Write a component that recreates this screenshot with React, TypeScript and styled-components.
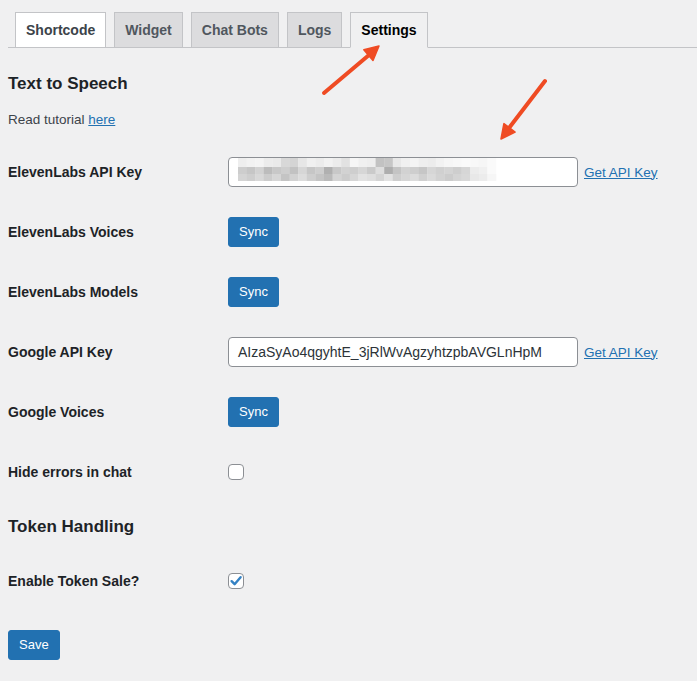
import React from "react";
import styled, { createGlobalStyle } from "styled-components";

const Global = createGlobalStyle`
  html, body { margin: 0; padding: 0; background: #f0f0f1; }
  body { font-family: "Liberation Sans", Arial, sans-serif; color: #1d2327; }
  #root { min-height: 681px; position: relative; }
`;

const Page = styled.div`
  padding: 0 0 0 8px;
  position: relative;
  min-height: 681px;
  box-sizing: border-box;
`;

const TabBar = styled.nav`
  display: flex;
  gap: 8px;
  padding: 12px 0 0 7px;
  border-bottom: 1px solid #c3c4c7;
`;

const Tab = styled.a<{ $state: "first" | "idle" | "active" }>`
  display: block;
  box-sizing: border-box;
  height: 36px;
  margin-bottom: -1px;
  padding: 5px 10px;
  border: 1px solid #c3c4c7;
  font-size: 14px;
  font-weight: 700;
  line-height: 24px;
  text-decoration: none;
  background: ${(p) => (p.$state === "first" ? "#ffffff" : p.$state === "active" ? "#f0f0f1" : "#dcdcde")};
  color: ${(p) => (p.$state === "first" ? "#3c434a" : p.$state === "active" ? "#000000" : "#50575e")};
  border-bottom-color: ${(p) => (p.$state === "active" ? "#f0f0f1" : "#c3c4c7")};
`;

const Heading = styled.h2<{ $top: number; $bottom: number }>`
  margin: ${(p) => p.$top}px 0 ${(p) => p.$bottom}px;
  font-size: 17px;
  line-height: 22px;
  font-weight: 700;
  color: #1d2327;
`;

const Note = styled.p`
  margin: 0 0 13px;
  font-size: 13.5px;
  line-height: 19px;
  color: #3c434a;
`;

const Link = styled.a`
  color: #2271b1;
  text-decoration: underline;
  font-size: 13.5px;
`;

const Form = styled.div`
  display: grid;
  grid-template-columns: 220px 1fr;
`;

const Label = styled.div`
  height: 60px;
  display: flex;
  align-items: center;
  font-size: 14px;
  font-weight: 700;
  color: #1d2327;
`;

const Field = styled.div`
  height: 60px;
  display: flex;
  align-items: center;
  gap: 6px;
`;

const TextBox = styled.div`
  box-sizing: border-box;
  width: 350px;
  height: 30px;
  padding: 0 9px;
  border: 1px solid #8c8f94;
  border-radius: 4px;
  background: #fff;
  display: flex;
  align-items: center;
  font-size: 14px;
  color: #2c3338;
  white-space: nowrap;
  overflow: hidden;
`;

const MaskBox = styled(TextBox)`
  align-items: flex-start;
  padding: 0 0 0 9px;
`;

const Button = styled.button`
  box-sizing: border-box;
  height: 30px;
  padding: 0 10px;
  border: 1px solid #2271b1;
  border-radius: 3px;
  background: #2271b1;
  color: #fff;
  font-family: "Liberation Sans", Arial, sans-serif;
  font-size: 13px;
  line-height: 28px;
  cursor: pointer;
`;

const SaveRow = styled.div`
  margin-top: 19px;
`;

const Box = styled.span`
  box-sizing: border-box;
  width: 16px;
  height: 16px;
  border: 1px solid #8c8f94;
  border-radius: 4px;
  background: #fff;
  display: inline-flex;
  align-items: center;
  justify-content: center;
`;

const Overlay = styled.svg`
  position: absolute;
  left: 0;
  top: 0;
  pointer-events: none;
`;

const Checkbox = ({ checked }: { checked?: boolean }) => (
  <Box>
    {checked && (
      <svg width="14" height="14" viewBox="0 0 14 14">
        <path d="M2.6 7.2 L5.6 10.2 L11.6 3.2" fill="none" stroke="#3582c4" strokeWidth="2.4" strokeLinecap="round" strokeLinejoin="round" />
      </svg>
    )}
  </Box>
);

const r0 = [238, 242, 244, 236, 234, 216, 212, 230, 240, 236, 242, 236, 226, 246, 240, 238, 194, 198, 232, 240, 244, 238, 236, 242, 246, 248, 250, 248, 246, 250];
const r1 = [205, 198, 210, 188, 200, 206, 194, 214, 198, 206, 176, 200, 210, 206, 214, 202, 222, 174, 196, 210, 206, 198, 214, 208, 212, 206, 214, 236, 240, 250];
const r2 = [212, 206, 216, 204, 214, 196, 210, 220, 206, 196, 186, 212, 204, 214, 226, 222, 212, 226, 206, 214, 220, 208, 218, 210, 204, 212, 216, 232, 236, 246];

const Mosaic = () => {
  const cw = 8.6;
  const rows = [
    { vals: r0, y: 0, h: 9 },
    { vals: r1, y: 9, h: 7 },
    { vals: r2, y: 16, h: 7 },
  ];
  return (
    <svg width="262" height="24" viewBox="0 0 262 24">
      {rows.map((row, ri) =>
        row.vals.map((v, ci) => (
          <rect key={`${ri}-${ci}`} x={ci * cw} y={row.y} width={cw + 0.3} height={row.h} fill={`rgb(${v},${v},${v})`} />
        ))
      )}
    </svg>
  );
};

const Arrows = () => (
  <Overlay width="697" height="681" viewBox="0 0 697 681">
    <g fill="#ef4b23" stroke="#ef4b23">
      <line x1="324" y1="93" x2="369" y2="55" strokeWidth="4" strokeLinecap="round" />
      <polygon points="379,46 373,60.5 363.8,49.8" strokeWidth="1.5" strokeLinejoin="round" />
      <line x1="545" y1="81" x2="509" y2="128" strokeWidth="4" strokeLinecap="round" />
      <polygon points="501,139 515.1,132.1 503.9,123.6" strokeWidth="1.5" strokeLinejoin="round" />
    </g>
  </Overlay>
);

export default function App() {
  return (
    <>
      <Global />
      <Page>
        <TabBar>
          <Tab $state="first">Shortcode</Tab>
          <Tab $state="idle">Widget</Tab>
          <Tab $state="idle">Chat Bots</Tab>
          <Tab $state="idle">Logs</Tab>
          <Tab $state="active">Settings</Tab>
        </TabBar>

        <Heading $top={25} $bottom={15}>Text to Speech</Heading>
        <Note>
          Read tutorial <Link href="#">here</Link>
        </Note>

        <Form>
          <Label>ElevenLabs API Key</Label>
          <Field>
            <MaskBox>
              <Mosaic />
            </MaskBox>
            <Link href="#">Get API Key</Link>
          </Field>

          <Label>ElevenLabs Voices</Label>
          <Field>
            <Button>Sync</Button>
          </Field>

          <Label>ElevenLabs Models</Label>
          <Field>
            <Button>Sync</Button>
          </Field>

          <Label>Google API Key</Label>
          <Field>
            <TextBox>AIzaSyAo4qgyhtE_3jRlWvAgzyhtzpbAVGLnHpM</TextBox>
            <Link href="#">Get API Key</Link>
          </Field>

          <Label>Google Voices</Label>
          <Field>
            <Button>Sync</Button>
          </Field>

          <Label>Hide errors in chat</Label>
          <Field>
            <Checkbox />
          </Field>
        </Form>

        <Heading $top={14} $bottom={13}>Token Handling</Heading>

        <Form>
          <Label>Enable Token Sale?</Label>
          <Field>
            <Checkbox checked />
          </Field>
        </Form>

        <SaveRow>
          <Button>Save</Button>
        </SaveRow>

        <Arrows />
      </Page>
    </>
  );
}
